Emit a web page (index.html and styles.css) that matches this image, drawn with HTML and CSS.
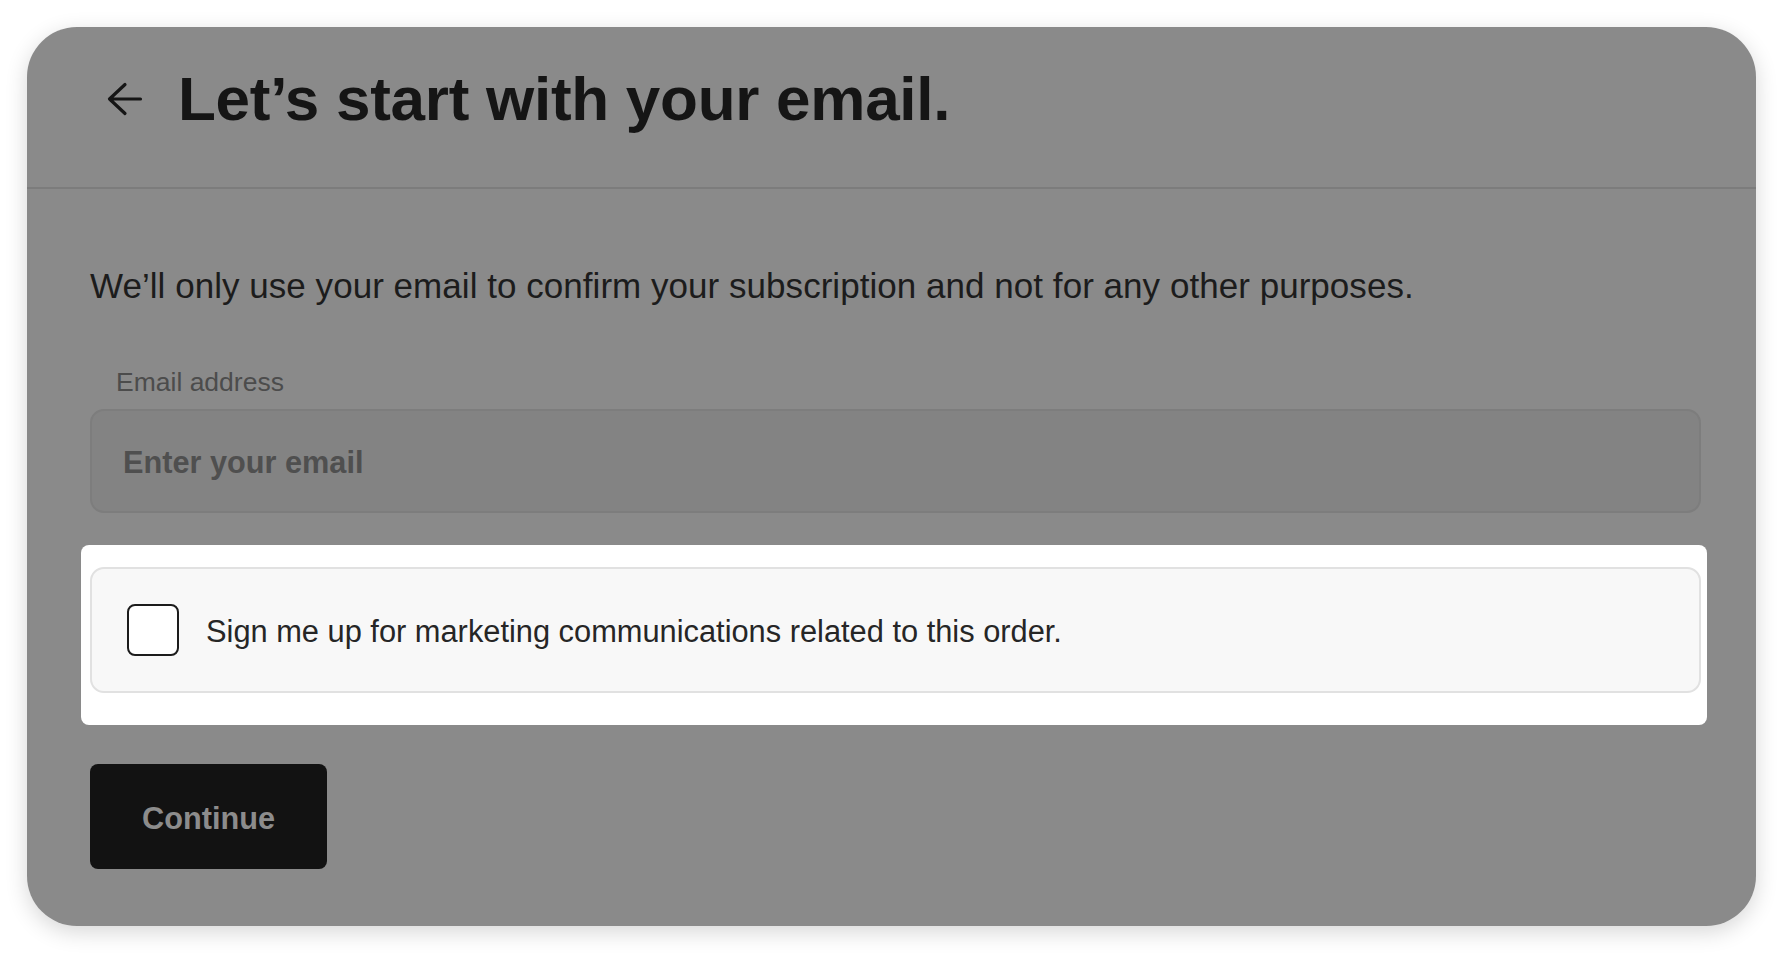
FILE: index.html
```html
<!DOCTYPE html>
<html lang="en">
<head>
<meta charset="utf-8">
<title>Let’s start with your email.</title>
<link rel="stylesheet" href="styles.css">
</head>
<body>
<div class="page">
  <section class="card">
    <header class="card-header">
      <button class="back" aria-label="Back">
        <svg width="34" height="32" viewBox="0 0 34 32" aria-hidden="true">
          <path d="M1.5 16 H32.5 M17 1.5 L1.5 16 L17 30.5" fill="none" stroke="#151515" stroke-width="3.2" stroke-linecap="round" stroke-linejoin="round"/>
        </svg>
      </button>
      <h1 class="title">Let’s start with your email.</h1>
    </header>
    <div class="card-body">
      <p class="intro">We’ll only use your email to confirm your subscription and not for any other purposes.</p>
      <label class="field-label" for="email">Email address</label>
      <div class="input">
        <span class="placeholder">Enter your email</span>
      </div>
      <div class="spotlight">
        <div class="consent">
          <span class="checkbox"></span>
          <span class="consent-text">Sign me up for marketing communications related to this order.</span>
        </div>
      </div>
      <div class="actions">
        <button class="continue">Continue</button>
      </div>
    </div>
  </section>
</div>
</body>
</html>
```

FILE: styles.css
```css
* { box-sizing: border-box; }

html, body {
  margin: 0;
  padding: 0;
  background: #ffffff;
  font-family: "Liberation Sans", Arial, Helvetica, sans-serif;
}

.page {
  padding: 27px 27px 28px 27px;
}

.card {
  height: 899px;
  background: #8a8a8a;
  border-radius: 50px;
  box-shadow: 0 6px 22px rgba(0, 0, 0, 0.16);
  display: flex;
  flex-direction: column;
  overflow: hidden;
}

.card-header {
  display: flex;
  align-items: center;
  gap: 36px;
  padding: 36px 0 52px 81px;
  border-bottom: 2px solid #7c7c7c;
}

.back {
  display: flex;
  padding: 0;
  margin: 0;
  border: 0;
  background: none;
  width: 34px;
  height: 32px;
}

.back svg { overflow: visible; }

.title {
  margin: 0;
  font-size: 62px;
  line-height: 72px;
  font-weight: 700;
  letter-spacing: -0.27px;
  color: #151515;
}

.card-body {
  display: flex;
  flex-direction: column;
  padding: 75px 55px 0 63px;
}

.intro {
  margin: 0;
  font-size: 35px;
  line-height: 44px;
  letter-spacing: 0.04px;
  color: #1c1c1c;
}

.field-label {
  margin-top: 58px;
  padding-left: 26px;
  font-size: 26.5px;
  line-height: 32px;
  color: #4c4c4c;
}

.input {
  margin-top: 11px;
  height: 104px;
  border: 2px solid #7d7d7d;
  border-radius: 14px;
  background: #838383;
  display: flex;
  align-items: center;
  padding: 4px 0 0 31px;
}

.placeholder {
  font-size: 30.7px;
  font-weight: 700;
  color: #4f4f4f;
}

.spotlight {
  margin: 32px -6px 0 -9px;
  padding: 22px 6px 32px 9px;
  background: #ffffff;
  border-radius: 8px;
}

.consent {
  height: 126px;
  display: flex;
  align-items: center;
  gap: 27px;
  padding-left: 35px;
  background: #f8f8f8;
  border: 2px solid #e1e1e1;
  border-radius: 14px;
}

.checkbox {
  width: 52px;
  height: 52px;
  flex: none;
  background: #ffffff;
  border: 2px solid #1c1c1c;
  border-radius: 8px;
}

.consent-text {
  font-size: 30.8px;
  padding-top: 3px;
  color: #262626;
}

.actions {
  margin-top: 39px;
  display: flex;
}

.continue {
  width: 237px;
  height: 105px;
  border: 0;
  border-radius: 8px;
  background: #121212;
  color: #8c8c8c;
  font-family: "Liberation Sans", Arial, Helvetica, sans-serif;
  font-size: 30.7px;
  font-weight: 700;
  padding: 4px 0 0 0;
}
```
